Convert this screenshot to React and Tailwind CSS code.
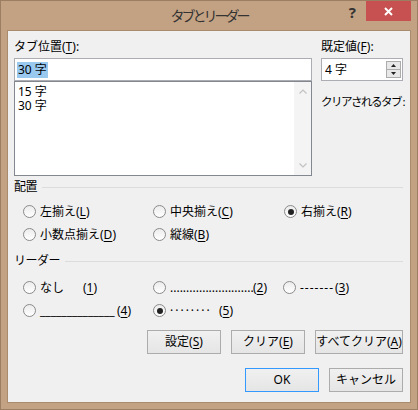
import React from 'react';

const K = ({ children }) => <span className="underline underline-offset-2">{children}</span>;

const Radio = ({ on }) => (
  <span className="w-[13px] h-[13px] shrink-0 rounded-full border border-[#8a8a8a] bg-linear-to-b from-[#ececec] to-white flex items-center justify-center">
    {on && <span className="w-[6px] h-[6px] rounded-full bg-[#222]" />}
  </span>
);

const Opt = ({ on, children }) => (
  <div className="h-[23px] flex items-center gap-[4px] whitespace-nowrap">
    <Radio on={on} />
    <span className="flex items-center">{children}</span>
  </div>
);

const Btn = ({ w, primary, children }) => (
  <button
    type="button"
    className={`${w} h-[24px] border ${primary ? 'border-[#3399ff]' : 'border-[#acacac]'} bg-linear-to-b from-[#f0f0f0] to-[#e5e5e5] flex items-center justify-center text-black`}
  >
    {children}
  </button>
);

const Group = ({ label }) => (
  <div className="flex items-center gap-[5px]">
    <span className="tracking-[-0.5px]">{label}</span>
    <div className="flex-1 h-px bg-[#dcdcdc]" />
  </div>
);

const Chevron = ({ up }) => (
  <div className="w-[17px] h-[17px] flex items-center justify-center">
    <svg width="8" height="5" viewBox="0 0 8 5">
      <path d={up ? 'M0.5 4.5 L4 1 L7.5 4.5' : 'M0.5 0.5 L4 4 L7.5 0.5'} fill="none" stroke="#c2c2c2" strokeWidth="1.2" />
    </svg>
  </div>
);

export default function App() {
  return (
    <div className="w-[418px] h-[410px] border border-[#9c7f63] bg-[#c3a283] flex flex-col font-['Noto_Sans','Noto_Sans_CJK_JP',sans-serif]">
      {/* title bar */}
      <div className="h-[29px] grid grid-cols-[1fr_auto_1fr]">
        <div />
        <div className="pt-[5px] text-[14px] leading-[20px] tracking-[-3px] text-[#333]">タブとリーダー</div>
        <div className="flex justify-end items-start pr-[6px]">
          <span className="mt-[4px] mr-[10px] text-[15px] leading-[14px] font-bold text-[#333]">?</span>
          <div className="w-[45px] h-[20px] bg-[#c75050] flex items-center justify-center">
            <svg width="9" height="9" viewBox="0 0 9 9">
              <path d="M1 1 L8 8 M8 1 L1 8" stroke="white" strokeWidth="2" />
            </svg>
          </div>
        </div>
      </div>

      {/* client */}
      <div className="mx-[6px] mb-[6px] flex-1 border border-[#a98b6d] bg-[#f0f0f0] flex flex-col pl-[6px] pr-[7px] text-[12px] leading-[16px] text-black">
        <div className="flex gap-[9px] pt-[8px]">
          <div className="w-[298px] flex flex-col">
            <div className="mb-[3px]">タブ位置(<K>T</K>):</div>
            <div className="h-[23px] border border-[#abadb3] bg-white flex items-center pl-[2px]">
              <span className="bg-[#99c9ef] px-[1px] leading-[16px]">30 字</span>
            </div>
            <div className="h-[95px] border border-[#828790] bg-white flex">
              <div className="flex-1 pt-[3px] pl-[3px] leading-[14px]">
                <div>15 字</div>
                <div>30 字</div>
              </div>
              <div className="w-[17px] bg-[#f4f4f4] flex flex-col justify-between py-[1px]">
                <Chevron up />
                <Chevron />
              </div>
            </div>
          </div>

          <div className="w-[82px] flex flex-col">
            <div className="mb-[3px]">既定値(<K>F</K>):</div>
            <div className="h-[23px] border border-[#abadb3] bg-white flex items-center">
              <span className="flex-1 pl-[3px]">4 字</span>
              <div className="w-[15px] h-[17px] mr-[1px] flex flex-col border border-[#acacac]">
                <div className="flex-1 bg-[#e8e8e8] flex items-center justify-center border-b border-[#acacac]">
                  <svg width="5" height="3" viewBox="0 0 5 3"><path d="M2.5 0 L5 3 L0 3 Z" fill="#222" /></svg>
                </div>
                <div className="flex-1 bg-[#e8e8e8] flex items-center justify-center">
                  <svg width="5" height="3" viewBox="0 0 5 3"><path d="M0 0 L5 0 L2.5 3 Z" fill="#222" /></svg>
                </div>
              </div>
            </div>
            <div className="mt-[13px] whitespace-nowrap text-[11.5px] tracking-[-1.5px]">クリアされるタブ :</div>
          </div>
        </div>

        {/* alignment */}
        <div className="mt-[3px]">
          <Group label="配置" />
        </div>
        <div className="mt-[5px] grid grid-cols-[130px_131px_1fr] pl-[9px]">
          <Opt>左揃え(<K>L</K>)</Opt>
          <Opt>中央揃え(<K>C</K>)</Opt>
          <Opt on>右揃え(<K>R</K>)</Opt>
          <Opt>小数点揃え(<K>D</K>)</Opt>
          <Opt>縦線(<K>B</K>)</Opt>
          <div />
        </div>

        {/* leader */}
        <div className="mt-[7px]">
          <Group label="リーダー" />
        </div>
        <div className="mt-[7px] grid grid-cols-[130px_130px_1fr] pl-[9px]">
          <Opt>
            <span className="w-[43px]">なし</span>(<K>1</K>)
          </Opt>
          <Opt>
            <span className="w-[83px] whitespace-nowrap">..........................</span>(<K>2</K>)
          </Opt>
          <Opt>
            <span className="w-[35px] whitespace-nowrap tracking-[1px]">-------</span>(<K>3</K>)
          </Opt>
          <Opt>
            <span className="w-[77px] whitespace-nowrap">______________</span>(<K>4</K>)
          </Opt>
          <Opt on>
            <span className="w-[49px] whitespace-nowrap tracking-[2px]">········</span>(<K>5</K>)
          </Opt>
          <div />
        </div>

        {/* buttons */}
        <div className="mt-[8px] flex justify-end gap-[10px]">
          <Btn w="w-[74px]">設定(<K>S</K>)</Btn>
          <Btn w="w-[74px]">クリア(<K>E</K>)</Btn>
          <Btn w="w-[88px]">すべてクリア(<K>A</K>)</Btn>
        </div>
        <div className="mt-[14px] flex justify-end gap-[10px]">
          <Btn w="w-[74px]" primary>OK</Btn>
          <Btn w="w-[74px]">キャンセル</Btn>
        </div>
      </div>
    </div>
  );
}
